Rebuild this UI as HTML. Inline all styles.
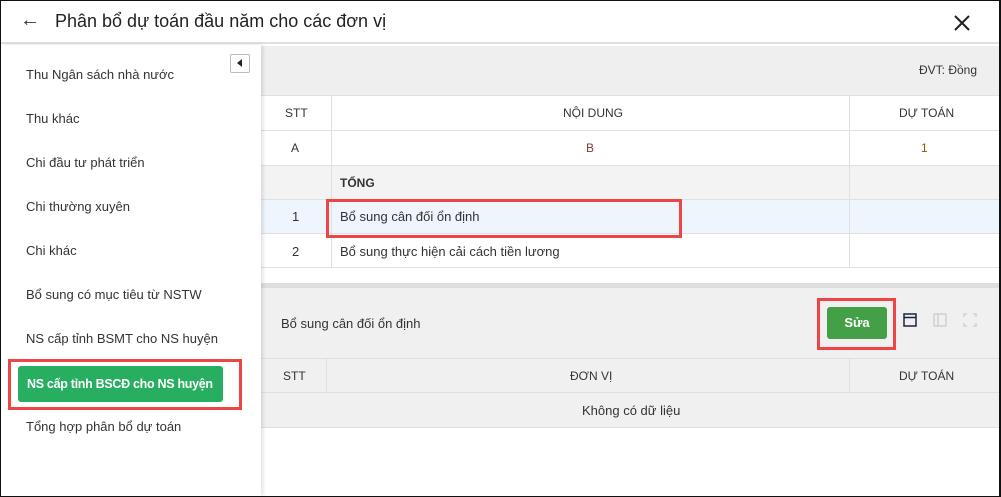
<!DOCTYPE html>
<html><head><meta charset="utf-8"><style>
*{box-sizing:border-box;margin:0;padding:0}
body{width:1001px;height:497px;overflow:hidden;background:#fff;font-family:"Liberation Sans",sans-serif;color:#222;position:relative}
.frame{position:absolute;left:0;top:0;width:1001px;height:497px;border:1px solid #111;border-right:2px solid #111}
.abs{position:absolute}
.hdr{left:1px;top:1px;width:998px;height:43px;background:#fff;border-bottom:2px solid #e0e0e0}
.side{left:1px;top:45px;width:260px;height:451px;background:#fff;box-shadow:2px 0 4px rgba(0,0,0,.12);z-index:2}
.item{position:absolute;left:25px;font-size:13px;color:#333;white-space:nowrap}
.t{font-size:12px;color:#333;position:absolute;white-space:nowrap}
</style></head><body>
<div class="abs hdr"></div>
<div class="abs" style="left:20px;top:9px;font-size:20px;color:#333">←</div>
<div class="abs" style="left:55px;top:11px;font-size:18px;color:#222;white-space:nowrap">Phân bổ dự toán đầu năm cho các đơn vị</div>
<svg class="abs" style="left:953px;top:14px" width="18" height="18"><path d="M2 2L16 16M16 2L2 16" stroke="#222" stroke-width="2"/></svg>

<div class="abs" style="left:261px;top:46px;width:738px;height:49px;background:#efefef"></div>
<div class="t" style="left:919px;top:63px">ĐVT: Đồng</div>
<div class="abs" style="left:261px;top:95px;width:738px;height:173px;background:#fff;border-top:1px solid #e0e0e0"></div>
<div class="abs" style="left:261px;top:165px;width:738px;height:34px;background:#f3f3f3"></div>
<div class="abs" style="left:261px;top:199px;width:738px;height:34px;background:#eef5fc"></div>
<div class="abs" style="left:261px;top:130px;width:738px;height:1px;background:#e0e0e0"></div>
<div class="abs" style="left:261px;top:165px;width:738px;height:1px;background:#e0e0e0"></div>
<div class="abs" style="left:261px;top:199px;width:738px;height:1px;background:#e0e0e0"></div>
<div class="abs" style="left:261px;top:233px;width:738px;height:1px;background:#e0e0e0"></div>
<div class="abs" style="left:261px;top:267px;width:738px;height:1px;background:#e0e0e0"></div>
<div class="abs" style="left:331px;top:95px;width:1px;height:172px;background:#e0e0e0"></div>
<div class="abs" style="left:849px;top:95px;width:1px;height:172px;background:#e0e0e0"></div>
<div class="t" style="left:285px;top:106px">STT</div>
<div class="t" style="left:563px;top:106px">NỘI DUNG</div>
<div class="t" style="left:899px;top:106px">DỰ TOÁN</div>
<div class="t" style="left:291px;top:141px">A</div>
<div class="t" style="left:586px;top:141px;color:#7a3b3b">B</div>
<div class="t" style="left:921px;top:141px;color:#8a5a00">1</div>
<div class="t" style="left:340px;top:176px;font-weight:bold">TỔNG</div>
<div class="t" style="left:292px;top:209px;font-size:13px">1</div>
<div class="t" style="left:340px;top:209px;font-size:13px">Bổ sung cân đối ổn định</div>
<div class="t" style="left:292px;top:244px;font-size:13px">2</div>
<div class="t" style="left:340px;top:244px;font-size:13px">Bổ sung thực hiện cải cách tiền lương</div>
<div class="abs" style="left:326px;top:199px;width:356px;height:39px;border:3px solid #ef4444"></div>

<div class="abs" style="left:261px;top:283px;width:738px;height:5px;background:#dedede"></div>
<div class="abs" style="left:261px;top:288px;width:738px;height:140px;background:#f0f0f0;border-bottom:1px solid #e0e0e0"></div>
<div class="t" style="left:281px;top:316px;font-size:13px">Bổ sung cân đối ổn định</div>
<div class="abs" style="left:817px;top:298px;width:79px;height:52px;border:3px solid #ef4444"></div>
<div class="abs" style="left:827px;top:307px;width:60px;height:32px;background:#43a047;border-radius:3px;color:#fff;font-weight:bold;font-size:13px;text-align:center;line-height:32px">Sửa</div>
<svg class="abs" style="left:903px;top:313px" width="15" height="15"><rect x="1" y="1" width="12" height="12" fill="none" stroke="#1a2340" stroke-width="1.5"/><path d="M1 4.5H13" stroke="#1a2340" stroke-width="1.5"/></svg>
<svg class="abs" style="left:933px;top:313px" width="15" height="15"><rect x="1" y="1" width="12" height="12" fill="none" stroke="#ccc" stroke-width="1.3"/><path d="M5 1V13" stroke="#ccc" stroke-width="1.3"/></svg>
<svg class="abs" style="left:963px;top:313px" width="15" height="15"><path d="M1 4V1H4M10 1H13V4M13 10V13H10M4 13H1V10" fill="none" stroke="#ccc" stroke-width="1.3"/></svg>
<div class="abs" style="left:261px;top:358px;width:738px;height:1px;background:#e0e0e0"></div>
<div class="abs" style="left:261px;top:392px;width:738px;height:1px;background:#e0e0e0"></div>
<div class="abs" style="left:326px;top:358px;width:1px;height:34px;background:#e0e0e0"></div>
<div class="abs" style="left:849px;top:358px;width:1px;height:34px;background:#e0e0e0"></div>
<div class="t" style="left:283px;top:369px">STT</div>
<div class="t" style="left:570px;top:369px">ĐƠN VỊ</div>
<div class="t" style="left:899px;top:369px">DỰ TOÁN</div>
<div class="t" style="left:582px;top:403px;font-size:13px">Không có dữ liệu</div>

<div class="abs side">
<div class="abs" style="left:229px;top:9px;width:20px;height:19px;border:1px solid #bbb;border-radius:2px;background:#fff"></div>
<div class="abs" style="left:236px;top:14px;width:0;height:0;border-top:4px solid transparent;border-bottom:4px solid transparent;border-right:5px solid #222"></div>
<div class="item" style="top:22px">Thu Ngân sách nhà nước</div>
<div class="item" style="top:66px">Thu khác</div>
<div class="item" style="top:110px">Chi đầu tư phát triển</div>
<div class="item" style="top:154px">Chi thường xuyên</div>
<div class="item" style="top:198px">Chi khác</div>
<div class="item" style="top:242px">Bổ sung có mục tiêu từ NSTW</div>
<div class="item" style="top:286px">NS cấp tỉnh BSMT cho NS huyện</div>
<div class="abs" style="left:7px;top:314px;width:234px;height:51px;border:3px solid #ef4444"></div>
<div class="abs" style="left:17px;top:321px;width:205px;height:36px;background:#27ae60;border-radius:3px;color:#fff;font-weight:bold;font-size:12.5px;line-height:36px;padding-left:9px;white-space:nowrap;letter-spacing:-0.3px">NS cấp tỉnh BSCĐ cho NS huyện</div>
<div class="item" style="top:374px">Tổng hợp phân bổ dự toán</div>
</div>
<div class="frame"></div>
</body></html>
